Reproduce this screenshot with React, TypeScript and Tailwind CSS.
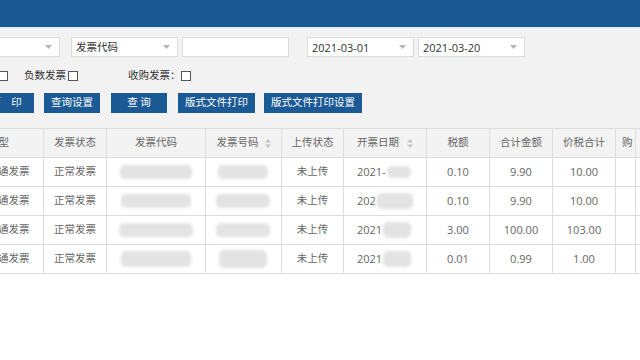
import React from 'react';

const FONT = { fontFamily: '"Open Sans", "Noto Sans CJK SC", sans-serif' };

function Arrow() {
  return (
    <svg width="7" height="4" viewBox="0 0 7 4" className="shrink-0">
      <path d="M0 0h7L3.5 4z" fill="#b5b5b5" />
    </svg>
  );
}

function SortIcon() {
  return (
    <svg width="6" height="9" viewBox="0 0 6 9" className="shrink-0">
      <path d="M3 0l3 3.5H0z" fill="#c4c4c4" />
      <path d="M3 9l3-3.5H0z" fill="#c4c4c4" />
    </svg>
  );
}

function Select({ value, className }: { value?: string; className?: string }) {
  return (
    <div
      className={`h-[20px] w-[107px] shrink-0 bg-white border border-[#dcdcdc] flex items-center justify-between pl-[4px] pr-[7px] text-[10.5px] text-[#333] ${className ?? ''}`}
    >
      <span className="leading-none">{value}</span>
      <Arrow />
    </div>
  );
}

function Checkbox() {
  return <span className="w-[10px] h-[10px] shrink-0 bg-white border border-[#555]" />;
}

function Btn({ label, className }: { label: string; className?: string }) {
  return (
    <div
      className={`h-[20px] shrink-0 bg-[#1b5a95] text-white text-[10.5px] flex items-center justify-center whitespace-pre ${className ?? ''}`}
    >
      {label}
    </div>
  );
}

function Blob({ w, h = 14, className }: { w: number; h?: number; className?: string }) {
  return (
    <span
      className={`inline-block rounded-[5px] bg-[#e3e3e3] blur-[1.5px] align-middle ${className ?? ''}`}
      style={{ width: w, height: h }}
    />
  );
}

const widths = [70, 63, 99, 76, 62, 83, 63, 63, 63, 20, 30];

type Row = {
  type: string;
  status: string;
  codeW: number;
  numW: number;
  date: string;
  dateW: number;
  tax: string;
  amount: string;
  total: string;
};

const rows: Row[] = [
  { type: '普通发票', status: '正常发票', codeW: 72, numW: 50, date: '2021-', dateW: 24, tax: '0.10', amount: '9.90', total: '10.00' },
  { type: '普通发票', status: '正常发票', codeW: 70, numW: 54, date: '202', dateW: 36, tax: '0.10', amount: '9.90', total: '10.00' },
  { type: '普通发票', status: '正常发票', codeW: 74, numW: 54, date: '2021', dateW: 28, tax: '3.00', amount: '100.00', total: '103.00' },
  { type: '普通发票', status: '正常发票', codeW: 70, numW: 48, date: '2021', dateW: 28, tax: '0.01', amount: '0.99', total: '1.00' },
];

function Cell({ i, children, className }: { i: number; children?: React.ReactNode; className?: string }) {
  return (
    <div
      className={`h-full shrink-0 border-r border-[#dedede] flex items-center justify-center overflow-hidden whitespace-nowrap ${className ?? ''}`}
      style={{ width: widths[i] }}
    >
      {children}
    </div>
  );
}

export default function App() {
  return (
    <div className="w-[640px] h-[360px] overflow-hidden bg-white" style={FONT}>
      <div className="h-[27px] bg-[#1a5894]" />
      <div className="h-[2px] bg-[#e4ebf2]" />
      <div className="bg-[#f2f2f2] h-[99px] pt-[8px]">
        <div className="flex items-center">
          <Select className="-ml-[47px]" />
          <Select value="发票代码" className="ml-[11px]" />
          <div className="h-[20px] w-[107px] ml-[4px] bg-white border border-[#dcdcdc]" />
          <Select value="2021-03-01" className="ml-[18px] text-[11px]" />
          <Select value="2021-03-20" className="ml-[4px] text-[11px]" />
        </div>
        <div className="flex items-center mt-[13px] h-[12px] text-[10.5px] text-[#333] whitespace-nowrap">
          <div className="flex items-center gap-[2px] -ml-[46px] shrink-0">
            <span className="w-[42px]">全部发票</span>
            <Checkbox />
          </div>
          <div className="flex items-center gap-[2px] ml-[16px] shrink-0">
            <span className="w-[42px]">负数发票</span>
            <Checkbox />
          </div>
          <div className="flex items-center ml-[50px] shrink-0">
            <span className="w-[53px]">收购发票：</span>
            <Checkbox />
          </div>
        </div>
        <div className="flex items-center mt-[11px]">
          <Btn label="打　印" className="w-[56px] -ml-[22px]" />
          <Btn label="查询设置" className="w-[56px] ml-[10px]" />
          <Btn label="查 询" className="w-[56px] ml-[11px]" />
          <Btn label="版式文件打印" className="w-[77px] ml-[11px]" />
          <Btn label="版式文件打印设置" className="w-[98px] ml-[9px]" />
        </div>
      </div>

      <div className="-ml-[26px] text-[10.5px] text-[#666]">
        <div className="flex h-[30px] bg-[#f3f3f3] border-t border-b border-[#dcdcdc]">
          <Cell i={0} className="!justify-end pr-[34px]">发票类型</Cell>
          <Cell i={1}>发票状态</Cell>
          <Cell i={2}>发票代码</Cell>
          <Cell i={3} className="gap-[6px]">
            <span>发票号码</span>
            <SortIcon />
          </Cell>
          <Cell i={4}>上传状态</Cell>
          <Cell i={5} className="gap-[8px]">
            <span>开票日期</span>
            <SortIcon />
          </Cell>
          <Cell i={6}>税额</Cell>
          <Cell i={7}>合计金额</Cell>
          <Cell i={8}>价税合计</Cell>
          <Cell i={9} className="!justify-start pl-[6px]">
            <span className="w-[11px] overflow-hidden">购方名称</span>
          </Cell>
          <Cell i={10} />
        </div>
        {rows.map((r, idx) => (
          <div key={idx} className="flex h-[29px] bg-white border-b border-[#dcdcdc] text-[11px]">
            <Cell i={0} className="text-[10.5px]">{r.type}</Cell>
            <Cell i={1} className="text-[10.5px]">{r.status}</Cell>
            <Cell i={2}>
              <Blob w={r.codeW} h={idx === 3 ? 16 : 14} />
            </Cell>
            <Cell i={3}>
              <Blob w={r.numW} h={idx === 3 ? 18 : 14} className="ml-[-2px]" />
            </Cell>
            <Cell i={4} className="text-[10.5px]">未上传</Cell>
            <Cell i={5} className="!justify-start pl-[13px]">
              <span>{r.date}</span>
              <Blob w={r.dateW} h={idx === 0 ? 12 : 16} className="ml-[1px]" />
            </Cell>
            <Cell i={6}>{r.tax}</Cell>
            <Cell i={7}>{r.amount}</Cell>
            <Cell i={8}>{r.total}</Cell>
            <Cell i={9} />
            <Cell i={10} />
          </div>
        ))}
      </div>
    </div>
  );
}
